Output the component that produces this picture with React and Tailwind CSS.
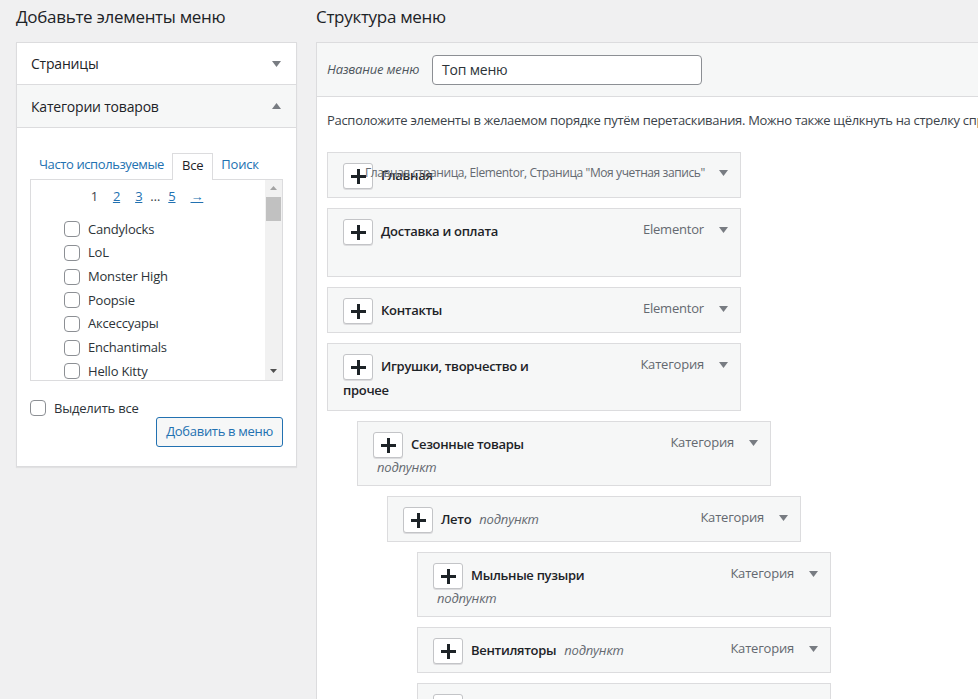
import React from "react";

const categories = ["Candylocks", "LoL", "Monster High", "Poopsie", "Аксессуары", "Enchantimals", "Hello Kitty"];

const items = [
  { depth: 0, title: "Главная", type: "Главная страница, Elementor, Страница \"Моя учетная запись\"", overlap: true },
  { depth: 0, title: "Доставка и оплата", type: "Elementor", extra: { text: "", h: "h-[23px]" } },
  { depth: 0, title: "Контакты", type: "Elementor" },
  { depth: 0, title: "Игрушки, творчество и", type: "Категория", extra: { text: "прочее", h: "h-[22px]", plain: true } },
  { depth: 1, title: "Сезонные товары", type: "Категория", extra: { text: "подпункт", h: "h-[19px]" } },
  { depth: 2, title: "Лето", sub: "подпункт", type: "Категория" },
  { depth: 3, title: "Мыльные пузыри", type: "Категория", extra: { text: "подпункт", h: "h-[19px]" } },
  { depth: 3, title: "Вентиляторы", sub: "подпункт", type: "Категория" },
  { depth: 3, title: "Жаркое лето", type: "Категория" },
];

const indent = ["ml-0", "ml-[30px]", "ml-[60px]", "ml-[90px]"];

function Tri({ up }) {
  return (
    <svg width="9" height="6" viewBox="0 0 9 6" className="block">
      {up ? <path d="M0 6 L4.5 0 L9 6 Z" fill="#787c82" /> : <path d="M0 0 L9 0 L4.5 6 Z" fill="#787c82" />}
    </svg>
  );
}

function Checkbox() {
  return <span className="inline-block h-4 w-4 shrink-0 rounded-[4px] border border-[#8c8f94] bg-white" />;
}

function PlusButton() {
  return (
    <span className="inline-flex h-[26px] w-[30px] shrink-0 items-center justify-center rounded-[3px] border border-[#c3c4c7] bg-white shadow-[0_1px_0_#dcdcde]">
      <svg width="15" height="15" viewBox="0 0 15 15">
        <rect x="6" y="0" width="3" height="15" fill="#1d2327" />
        <rect x="0" y="6" width="15" height="3" fill="#1d2327" />
      </svg>
    </span>
  );
}

function MenuItem({ item }) {
  return (
    <div className={`relative mt-[10px] w-[414px] border border-[#dcdcde] bg-[#f6f7f7] ${indent[item.depth]}`}>
      <div className="pb-[8px] pl-[15px] pt-[10px]">
        <div className="flex h-[26px] items-center">
          <PlusButton />
          <span className="ml-[8px] text-[13px] font-semibold tracking-[-0.3px] text-[#1d2327]">{item.title}</span>
          {item.sub && <span className="ml-[8px] text-[13px] italic text-[#646970]">{item.sub}</span>}
        </div>
        {item.extra && (
          <div
            className={`${item.extra.h} flex items-center ${item.extra.plain ? "text-[13px] font-semibold tracking-[-0.3px] text-[#1d2327]" : "pl-[4px] text-[13px] italic text-[#646970]"}`}
          >
            {item.extra.text}
          </div>
        )}
      </div>
      <div className="absolute right-[12px] top-[11px] flex items-center gap-[15px]">
        <span className="text-[13px] tracking-[-0.2px] text-[#646970]">{item.type}</span>
        <Tri />
      </div>
    </div>
  );
}

export default function App() {
  return (
    <div className="flex min-h-screen overflow-hidden bg-[#f0f0f1] font-['Open_Sans',sans-serif] tracking-[-0.2px] text-[#3c434a]">
      {/* left column */}
      <div className="w-[297px] shrink-0 pl-4 pt-[6px]">
        <h2 className="h-[22px] text-[17px] leading-[22px] tracking-[-0.3px] text-[#1d2327]">Добавьте элементы меню</h2>
        <div className="mt-[14px] border border-[#dcdcde] bg-white shadow-[0_1px_1px_rgba(0,0,0,0.06)]">
          <div className="flex h-[42px] items-center justify-between border-b border-[#dcdcde] pl-[14px] pr-[15px]">
            <span className="text-[14px] text-[#1d2327]">Страницы</span>
            <Tri />
          </div>
          <div className="flex h-[43px] items-center justify-between border-b border-[#dcdcde] bg-[#f6f7f7] pl-[14px] pr-[15px]">
            <span className="text-[14px] text-[#1d2327]">Категории товаров</span>
            <Tri up />
          </div>
          <div className="px-[13px] pb-[19px] pt-[24px]">
            <div className="flex items-end pl-[1px] text-[13px]">
              <span className="px-2 pb-[4px] tracking-[-0.4px] text-[#2271b1]">Часто используемые</span>
              <span className="relative top-[1px] border border-b-0 border-[#dcdcde] bg-white px-[9px] pb-[4px] pt-[2px] text-[#1d2327]">Все</span>
              <span className="px-2 pb-[4px] text-[#2271b1]">Поиск</span>
            </div>
            <div className="flex h-[202px] overflow-hidden border border-[#dcdcde] bg-white">
              <div className="flex-1">
                <div className="flex h-[34px] items-center justify-center gap-[15px] pr-[2px] text-[13px]">
                  <span className="text-[#3c434a]">1</span>
                  <span className="text-[#2271b1] underline">2</span>
                  <span className="text-[#2271b1] underline">3</span>
                  <span className="-mx-[7px] text-[#3c434a]">…</span>
                  <span className="text-[#2271b1] underline">5</span>
                  <span className="text-[#2271b1] underline">→</span>
                </div>
                <div className="pl-[33px] pt-[4px]">
                  {categories.map((c) => (
                    <div key={c} className="flex h-[23.7px] items-center gap-[8px] text-[13px] text-[#2c3338]">
                      <Checkbox />
                      <span>{c}</span>
                    </div>
                  ))}
                </div>
              </div>
              <div className="flex w-[17px] flex-col items-center bg-[#f1f1f1]">
                <div className="flex h-[17px] items-center justify-center">
                  <svg width="7" height="4" viewBox="0 0 7 4"><path d="M0 4 L3.5 0 L7 4 Z" fill="#a3a3a3" /></svg>
                </div>
                <div className="h-[24px] w-[15px] bg-[#c1c1c1]" />
                <div className="flex-1" />
                <div className="flex h-[17px] items-center justify-center">
                  <svg width="7" height="4" viewBox="0 0 7 4"><path d="M0 0 L7 0 L3.5 4 Z" fill="#505050" /></svg>
                </div>
              </div>
            </div>
            <div className="mt-[18px] flex items-center gap-[8px] text-[13px] text-[#2c3338]">
              <Checkbox />
              <span>Выделить все</span>
            </div>
            <div className="-mt-[1px] flex justify-end">
              <button className="h-[30px] rounded-[3px] border border-[#2271b1] bg-[#f6f7f7] px-[9px] text-[13px] tracking-[-0.3px] text-[#2271b1]">
                Добавить в меню
              </button>
            </div>
          </div>
        </div>
      </div>

      {/* right column */}
      <div className="ml-[19px] flex-1 pt-[6px]">
        <h2 className="h-[22px] whitespace-nowrap text-[17px] leading-[22px] tracking-[-0.3px] text-[#1d2327]">Структура меню</h2>
        <div className="mt-[14px] min-h-[700px] w-[700px] border border-r-0 border-[#dcdcde] bg-white">
          <div className="flex h-[54px] items-center border-b border-[#dcdcde] bg-[#f6f7f7] pl-[10px]">
            <span className="w-[105px] shrink-0 text-[13px] italic text-[#50575e]">Название меню</span>
            <div className="flex h-[30px] w-[270px] items-center rounded-[4px] border border-[#8c8f94] bg-white pl-[9px] text-[14px] text-[#2c3338]">
              Топ меню
            </div>
          </div>
          <div className="pl-[10px] pt-[13px]">
            <p className="h-[20px] whitespace-nowrap text-[13px] leading-[20px] tracking-[-0.3px] text-[#3c434a]">
              Расположите элементы в желаемом порядке путём перетаскивания. Можно также щёлкнуть на стрелку справа от элемента, чтобы открыть дополнительные настройки.
            </p>
            <div className="pt-[12px]">
              {items.map((it, i) =>
                it.overlap ? (
                  <div key={i} className="relative mt-[10px] w-[414px] border border-[#dcdcde] bg-[#f6f7f7]">
                    <div className="pb-[8px] pl-[15px] pt-[10px]">
                      <div className="flex h-[26px] items-center">
                        <PlusButton />
                        <span className="ml-[8px] text-[13px] font-semibold tracking-[-0.3px] text-[#1d2327]">{it.title}</span>
                      </div>
                    </div>
                    <div className="absolute left-[37px] right-[12px] top-[11px] flex items-center justify-between">
                      <span className="whitespace-nowrap text-[12px] tracking-[-0.4px] text-[#646970]">{it.type}</span>
                      <Tri />
                    </div>
                  </div>
                ) : (
                  <MenuItem key={i} item={it} />
                )
              )}
            </div>
          </div>
        </div>
      </div>
    </div>
  );
}
